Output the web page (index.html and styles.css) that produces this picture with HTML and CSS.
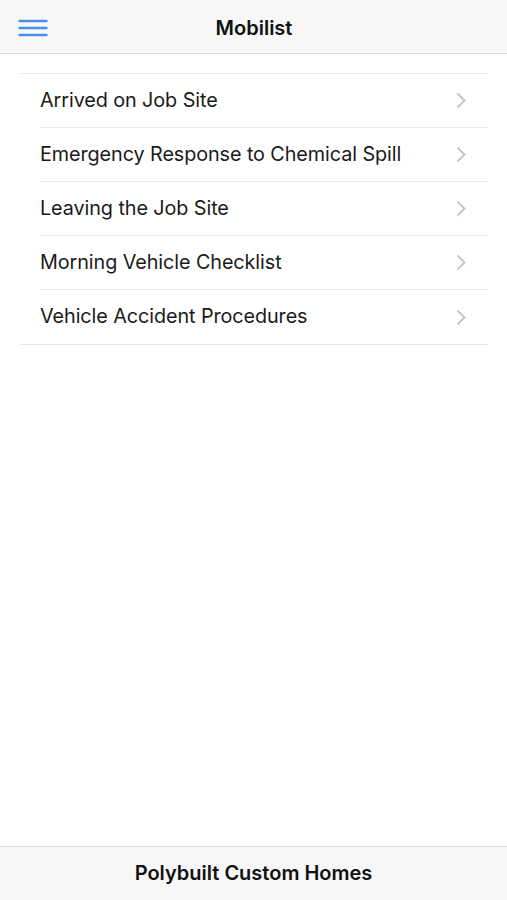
FILE: index.html
```html
<!DOCTYPE html>
<html>
<head>
<meta charset="utf-8">
<link rel="stylesheet" href="styles.css">
</head>
<body>
<div class="app">
  <header class="topbar">
    <button class="menu" aria-label="Menu">
      <svg width="30" height="18" viewBox="0 0 30 18"><g stroke="#4a8ef0" stroke-width="2.4" stroke-linecap="round"><line x1="1.5" y1="2" x2="28.5" y2="2"/><line x1="1.5" y1="9" x2="28.5" y2="9"/><line x1="1.5" y1="16" x2="28.5" y2="16"/></g></svg>
    </button>
    <h1 class="title">Mobilist</h1>
  </header>
  <main class="content">
    <ul class="list">
      <li class="row"><span class="label">Arrived on Job Site</span><svg class="chev" width="10" height="17" viewBox="0 0 10 17"><path d="M1.5 1.5 L8.5 8.5 L1.5 15.5" fill="none" stroke="#c4c4c8" stroke-width="1.8"/></svg></li>
      <li class="row"><span class="label">Emergency Response to Chemical Spill</span><svg class="chev" width="10" height="17" viewBox="0 0 10 17"><path d="M1.5 1.5 L8.5 8.5 L1.5 15.5" fill="none" stroke="#c4c4c8" stroke-width="1.8"/></svg></li>
      <li class="row"><span class="label">Leaving the Job Site</span><svg class="chev" width="10" height="17" viewBox="0 0 10 17"><path d="M1.5 1.5 L8.5 8.5 L1.5 15.5" fill="none" stroke="#c4c4c8" stroke-width="1.8"/></svg></li>
      <li class="row"><span class="label">Morning Vehicle Checklist</span><svg class="chev" width="10" height="17" viewBox="0 0 10 17"><path d="M1.5 1.5 L8.5 8.5 L1.5 15.5" fill="none" stroke="#c4c4c8" stroke-width="1.8"/></svg></li>
      <li class="row"><span class="label">Vehicle Accident Procedures</span><svg class="chev" width="10" height="17" viewBox="0 0 10 17"><path d="M1.5 1.5 L8.5 8.5 L1.5 15.5" fill="none" stroke="#c4c4c8" stroke-width="1.8"/></svg></li>
    </ul>
  </main>
  <footer class="bottombar">Polybuilt Custom Homes</footer>
</div>
</body>
</html>
```
FILE: styles.css
```css
* { box-sizing: border-box; }
html, body { margin: 0; padding: 0; }
body {
  font-family: Inter, "Liberation Sans", Arial, sans-serif;
  color: #111;
  background: #fff;
}
.app {
  display: flex;
  flex-direction: column;
  height: 900px;
}
.topbar {
  height: 54px;
  background: #f7f7f7;
  border-bottom: 1px solid #dcdcdc;
  display: flex;
  align-items: center;
  justify-content: center;
  position: relative;
  flex: none;
}
.menu {
  position: absolute;
  left: 18px;
  top: 19px;
  padding: 0;
  border: 0;
  background: none;
  display: flex;
}
.title {
  margin: 0 0 0 1px;
  padding-top: 2px;
  font-size: 20px;
  font-weight: 600;
  color: #111;
}
.content {
  flex: 1;
  padding: 19px 19px 0 20px;
}
.list {
  list-style: none;
  margin: 0;
  padding: 0;
  border-top: 1px solid #ececec;
  border-bottom: 1px solid #e4e4e4;
}
.row {
  height: 54px;
  margin-left: 20px;
  display: flex;
  align-items: center;
  justify-content: space-between;
  padding-right: 22px;
  border-bottom: 1px solid #ececec;
}
.row:last-child { border-bottom: 0; }
.label {
  font-size: 19.8px;
  letter-spacing: -0.08px;
  color: #1a1a1a;
  padding-bottom: 2px;
}
.chev { flex: none; }
.bottombar {
  flex: none;
  height: 54px;
  background: #f7f7f7;
  border-top: 1px solid #dcdcdc;
  display: flex;
  align-items: center;
  justify-content: center;
  padding-bottom: 2px;
  font-size: 20px;
  font-weight: 600;
  color: #111;
}
```
